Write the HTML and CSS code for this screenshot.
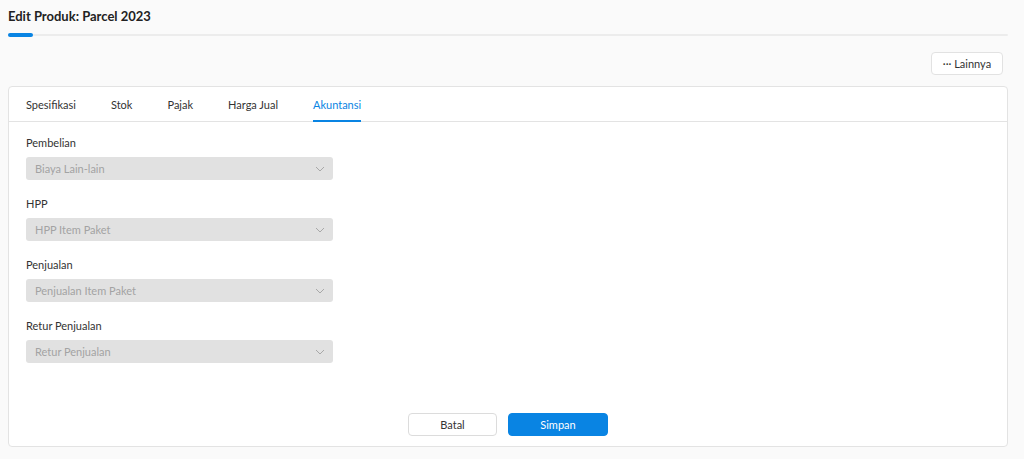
FILE: index.html
```html
<!DOCTYPE html>
<html lang="id">
<head>
  <meta charset="UTF-8" />
  <title>Edit Produk: Parcel 2023</title>
  <link rel="stylesheet" href="styles.css">
</head>
<body>

  <div class="page-head">
    <h1>Edit Produk: Parcel 2023</h1>
    <div class="head-line"><span class="head-mark"></span></div>
  </div>

  <div class="toolbar">
    <button class="btn-more">&middot;&middot;&middot; Lainnya</button>
  </div>

  <div class="card">
    <div class="tabs">
      <div class="tab">Spesifikasi</div>
      <div class="tab">Stok</div>
      <div class="tab">Pajak</div>
      <div class="tab">Harga Jual</div>
      <div class="tab active">Akuntansi</div>
    </div>

    <div class="form">
      <div class="field">
        <label>Pembelian</label>
        <div class="select">
          <span>Biaya Lain-lain</span>
          <svg width="10" height="6" viewBox="0 0 10 6"><path d="M1 1l4 4 4-4" fill="none" stroke="#a8a8a8" stroke-width="1"/></svg>
        </div>
      </div>
      <div class="field">
        <label>HPP</label>
        <div class="select">
          <span>HPP Item Paket</span>
          <svg width="10" height="6" viewBox="0 0 10 6"><path d="M1 1l4 4 4-4" fill="none" stroke="#a8a8a8" stroke-width="1"/></svg>
        </div>
      </div>
      <div class="field">
        <label>Penjualan</label>
        <div class="select">
          <span>Penjualan Item Paket</span>
          <svg width="10" height="6" viewBox="0 0 10 6"><path d="M1 1l4 4 4-4" fill="none" stroke="#a8a8a8" stroke-width="1"/></svg>
        </div>
      </div>
      <div class="field">
        <label>Retur Penjualan</label>
        <div class="select">
          <span>Retur Penjualan</span>
          <svg width="10" height="6" viewBox="0 0 10 6"><path d="M1 1l4 4 4-4" fill="none" stroke="#a8a8a8" stroke-width="1"/></svg>
        </div>
      </div>
    </div>

    <div class="actions">
      <button class="btn-cancel">Batal</button>
      <button class="btn-save">Simpan</button>
    </div>
  </div>

</body>
</html>
```

FILE: styles.css
```css
body {
  margin: 0;
  padding: 0 16px 0 8px;
  font-family: Lato, "Open Sans", sans-serif;
  background-color: #fafafa;
  color: #333;
  font-size: 11px;
}
.page-head {
  padding-top: 8px;
}
h1 {
  font-size: 13px;
  line-height: 16px;
  font-weight: 700;
  color: #222;
  margin: 0 0 10px 0;
}
.head-line {
  height: 2px;
  background: #ececec;
  position: relative;
  border-radius: 2px;
}
.head-mark {
  position: absolute;
  left: 0;
  top: -1px;
  width: 25px;
  height: 4px;
  border-radius: 2px;
  background: #0984e3;
}
.toolbar {
  display: flex;
  justify-content: flex-end;
  padding: 16px 5px 11px 0;
}
.btn-more {
  font-family: inherit;
  font-size: 11px;
  color: #333;
  background: #fff;
  border: 1px solid #e2e2e2;
  border-radius: 4px;
  height: 23px;
  width: 72px;
  padding: 0;
}
.card {
  background: #fff;
  border: 1px solid #e3e3e3;
  border-radius: 4px;
  height: 361px;
  box-sizing: border-box;
  display: flex;
  flex-direction: column;
}
.tabs {
  display: flex;
  padding-left: 17px;
  border-bottom: 1px solid #e3e3e3;
  height: 34px;
}
.tab {
  display: flex;
  align-items: center;
  padding-top: 2px;
  color: #333;
  margin-right: 35px;
  box-sizing: border-box;
  border-bottom: 2px solid transparent;
  margin-bottom: -1px;
}
.tab.active {
  color: #0984e3;
  border-bottom-color: #0984e3;
}
.form {
  padding: 14px 0 0 17px;
  display: flex;
  flex-direction: column;
  gap: 17px;
}
.field label {
  display: block;
  line-height: 14px;
  color: #333;
  margin-bottom: 7px;
}
.select {
  width: 307px;
  height: 23px;
  box-sizing: border-box;
  background: #e1e1e1;
  border-radius: 3px;
  color: #a3a3a3;
  display: flex;
  align-items: center;
  justify-content: space-between;
  padding: 0 8px 0 9px;
}
.actions {
  margin-top: auto;
  display: flex;
  justify-content: center;
  gap: 11px;
  padding: 0 0 10px 0;
}
.actions button {
  font-family: inherit;
  font-size: 11px;
  height: 23px;
  border-radius: 4px;
  padding: 0;
}
.btn-cancel {
  width: 89px;
  background: #fff;
  border: 1px solid #dcdcdc;
  color: #333;
}
.btn-save {
  width: 100px;
  background: #0984e3;
  border: 1px solid #0984e3;
  color: #fff;
}
```
